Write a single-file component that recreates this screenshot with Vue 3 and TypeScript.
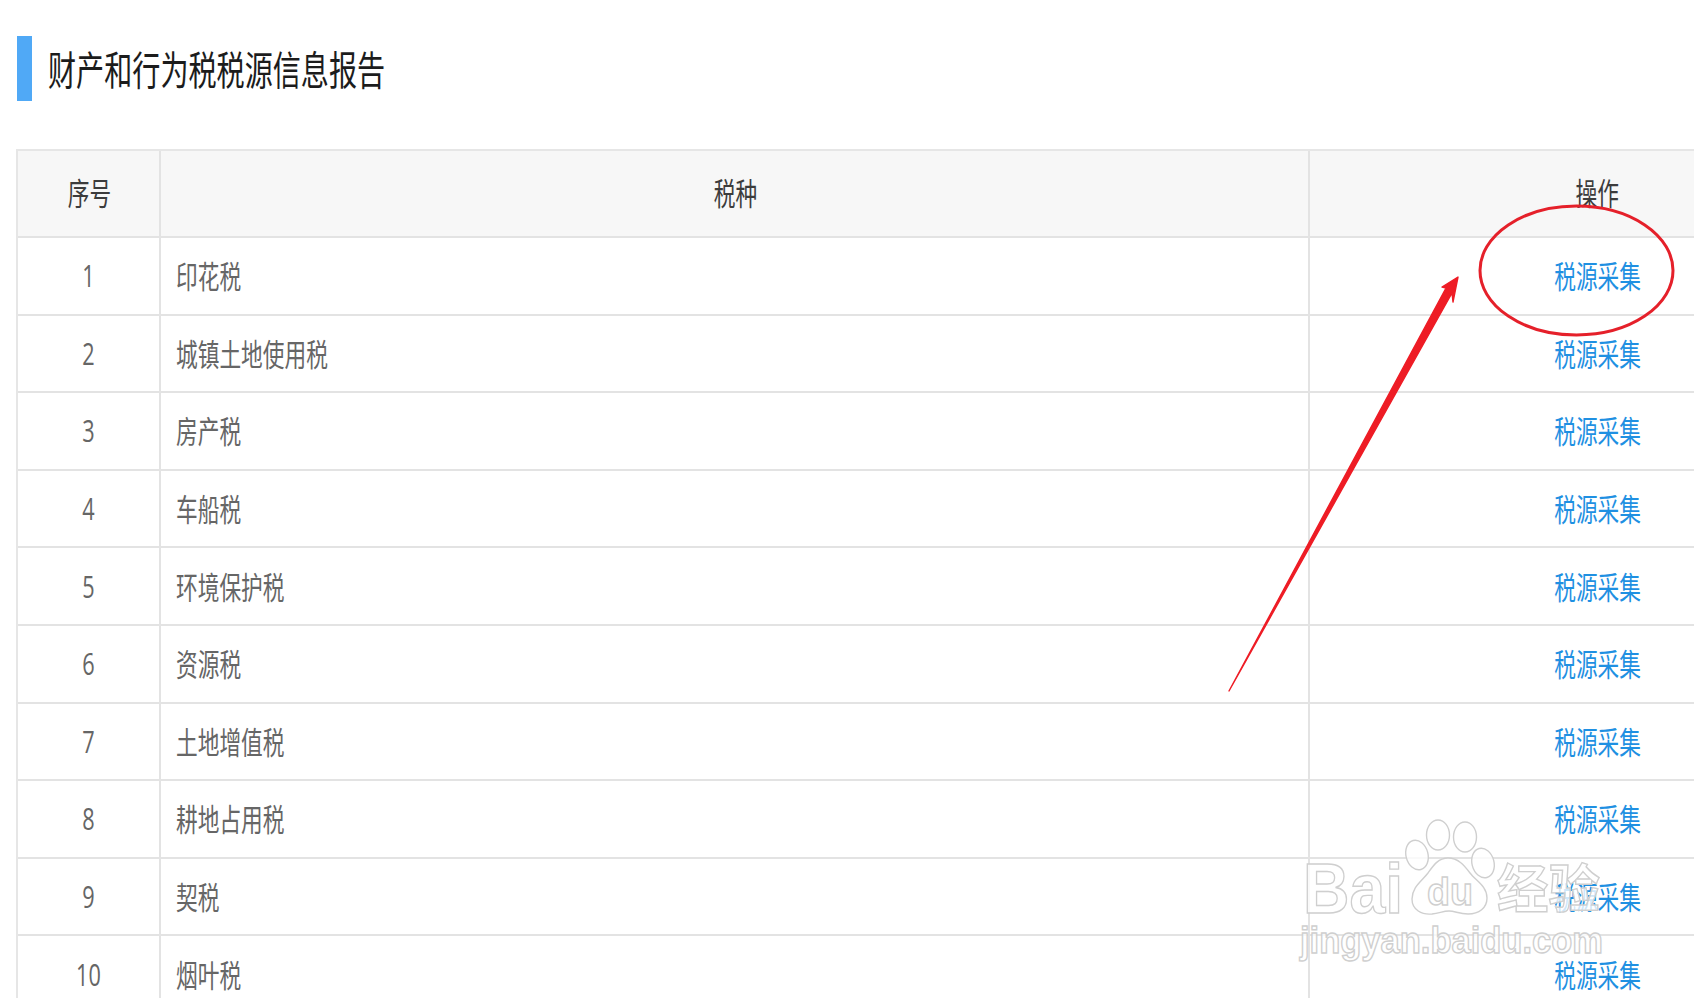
<script setup lang="ts">
const rows: { no: number; name: string }[] = [
  { no: 1, name: '印花税' },
  { no: 2, name: '城镇土地使用税' },
  { no: 3, name: '房产税' },
  { no: 4, name: '车船税' },
  { no: 5, name: '环境保护税' },
  { no: 6, name: '资源税' },
  { no: 7, name: '土地增值税' },
  { no: 8, name: '耕地占用税' },
  { no: 9, name: '契税' },
  { no: 10, name: '烟叶税' },
]
</script>

<template>
  <div class="page">
    <header class="title-row">
      <span class="bar"></span>
      <h1 class="title"><span class="tall">财产和行为税税源信息报告</span></h1>
    </header>

    <div class="table">
      <div class="row head">
        <div class="cell center"><span class="tall">序号</span></div>
        <div class="cell center"><span class="tall">税种</span></div>
        <div class="cell action"><span class="tall">操作</span></div>
      </div>
      <div v-for="r in rows" :key="r.no" class="row">
        <div class="cell center"><span class="tall">{{ r.no }}</span></div>
        <div class="cell name"><span class="tall">{{ r.name }}</span></div>
        <div class="cell action"><a class="tall link">税源采集</a></div>
      </div>
    </div>

    <svg class="overlay" width="1695" height="1000" viewBox="0 0 1695 1000">
      <!-- annotation -->
      <ellipse cx="1576.5" cy="270.5" rx="96.5" ry="64.5" fill="none" stroke="#e5202a" stroke-width="3" />
      <polygon points="1229,691 1446,288 1442,287 1458,277 1453,302 1452,293" fill="#ee1c25" stroke="#ee1c25" stroke-width="1.4" stroke-linejoin="round" />
      <!-- watermark -->
      <g class="wm">
        <ellipse cx="1438" cy="835" rx="11.5" ry="15" />
        <ellipse cx="1465" cy="837" rx="11.5" ry="15" />
        <ellipse cx="1417" cy="855" rx="11" ry="15" transform="rotate(-15 1417 855)" />
        <ellipse cx="1483" cy="863" rx="11" ry="15" transform="rotate(-15 1483 863)" />
        <path d="M1448 858C1438 858 1433 866 1428 873C1422 881 1412 887 1412 899C1412 910 1422 915 1432 914C1440 913 1443 911 1449 911C1455 911 1459 914 1468 914C1479 914 1487 908 1487 898C1487 886 1476 881 1470 873C1464 865 1458 858 1448 858Z" />
        <text x="1303" y="913" class="bold" font-size="70" textLength="100" lengthAdjust="spacingAndGlyphs">Bai</text>
        <text x="1427" y="905" class="bold" font-size="38" textLength="46" lengthAdjust="spacingAndGlyphs">du</text>
        <text x="1497" y="908" class="cjk" font-size="52" textLength="103" lengthAdjust="spacingAndGlyphs">经验</text>
        <text x="1300" y="953" class="bold" font-size="36" textLength="303" lengthAdjust="spacingAndGlyphs">jingyan.baidu.com</text>
      </g>
    </svg>
  </div>
</template>

<style>
html,
body {
  margin: 0;
  background: #fff;
}
</style>

<style scoped>
.page {
  position: relative;
  width: 1695px;
  height: 1000px;
  overflow: hidden;
  box-sizing: border-box;
  padding: 36px 1px 0 16px;
  background: #fff;
  font-family: "Open Sans", "Noto Sans CJK SC", sans-serif;
  font-weight: 400;
}
.title-row {
  display: flex;
  align-items: center;
  gap: 16px;
  height: 65px;
}
.bar {
  width: 15px;
  height: 65px;
  margin-left: 1px;
  background: #50a9f6;
}
.title {
  margin: 0;
  font-size: 28.1px;
  font-weight: 400;
  line-height: 65px;
  color: #1c1c1c;
}
.title .tall {
  transform: translateY(2px) scaleY(1.42);
}
.tall {
  display: inline-block;
  transform: translateY(-1px) scaleY(1.42);
}
.table {
  margin-top: 48px;
  height: 849px;
  overflow: hidden;
  border-top: 2px solid #e6e6e6;
  border-left: 2px solid #e6e6e6;
  box-sizing: border-box;
}
.row {
  display: grid;
  grid-template-columns: 141px 1149px 1fr;
  height: 77.6px;
  box-sizing: border-box;
  border-bottom: 2px solid #e3e3e3;
  font-size: 21.7px;
  color: #666;
}
.row.head {
  height: 87px;
  background: #f7f7f7;
  color: #3c3c3c;
}
.head .tall {
  transform: translateY(-2px) scaleY(1.42);
}
.head .center {
  padding-left: 2px;
}
.cell {
  display: flex;
  align-items: center;
  min-width: 0;
}
.cell + .cell {
  border-left: 2px solid #e3e3e3;
}
.center {
  justify-content: center;
}
.name {
  padding-left: 15px;
}
.action {
  justify-content: flex-end;
  padding-right: 53px;
}
.head .action {
  padding-right: 75px;
}
.link {
  color: #1f90e2;
}
.overlay {
  position: absolute;
  left: 0;
  top: 0;
  pointer-events: none;
}
.wm > * {
  fill: rgba(255, 255, 255, 0.78);
  stroke: #cfcfcf;
  stroke-width: 1.4;
}
.bold {
  font-family: "Liberation Sans", sans-serif;
  font-weight: 700;
}
.cjk {
  font-family: "Noto Sans CJK SC", sans-serif;
  font-weight: 700;
}
</style>
